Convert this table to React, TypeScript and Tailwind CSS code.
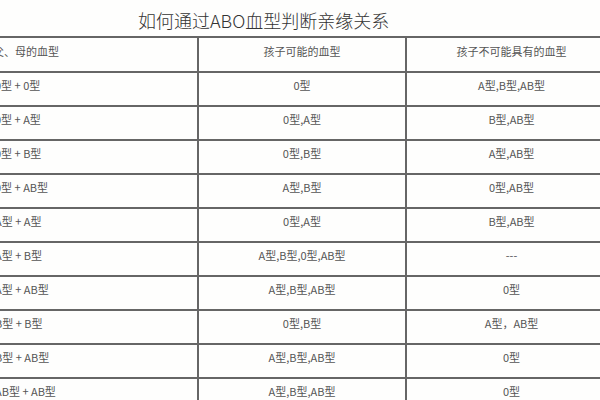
import React from "react";

const rows: [string, string, string][] = [
  ["0型+0型", "0型", "A型,B型,AB型"],
  ["0型+A型", "0型,A型", "B型,AB型"],
  ["0型+B型", "0型,B型", "A型,AB型"],
  ["0型+AB型", "A型,B型", "0型,AB型"],
  ["A型+A型", "0型,A型", "B型,AB型"],
  ["A型+B型", "A型,B型,0型,AB型", "---"],
  ["A型+AB型", "A型,B型,AB型", "0型"],
  ["B型+B型", "0型,B型", "A型，AB型"],
  ["B型+AB型", "A型,B型,AB型", "0型"],
  ["AB型+AB型", "A型,B型,AB型", "0型"],
];

export default function App() {
  return (
    <div
      className="w-[600px] h-[400px] overflow-hidden bg-[#fefefd] text-[#555]"
      style={{ fontFamily: '"Noto Sans CJK SC", "Noto Sans", sans-serif' }}
    >
      <div className="h-[36px] pl-[138px] pt-[7px] text-[18px] leading-[26px] font-light text-[#333]">
        如何通过ABO血型判断亲缘关系
      </div>
      <div className="ml-[-14px] w-[630px] grid grid-cols-[213px_208px_209px] text-[11px] leading-[14px]">
        <div className="h-[35px] border-t-2 border-r-2 border-[#666] pl-[7px] pt-[6px]">父、母的血型</div>
        <div className="h-[35px] border-t-2 border-r-2 border-[#666] text-center pt-[6px]">孩子可能的血型</div>
        <div className="h-[35px] border-t-2 border-[#666] text-center pt-[6px]">孩子不可能具有的血型</div>
        {rows.map((r, i) => (
          <React.Fragment key={i}>
            <div className="h-[34px] border-t-2 border-r-2 border-[#666] pl-[9px] pt-[5px]">{r[0].replace(/\+/g, " + ")}</div>
            <div className="h-[34px] border-t-2 border-r-2 border-[#666] text-center pt-[5px]">{r[1]}</div>
            <div className="h-[34px] border-t-2 border-[#666] text-center pt-[5px]">{r[2]}</div>
          </React.Fragment>
        ))}
      </div>
    </div>
  );
}
